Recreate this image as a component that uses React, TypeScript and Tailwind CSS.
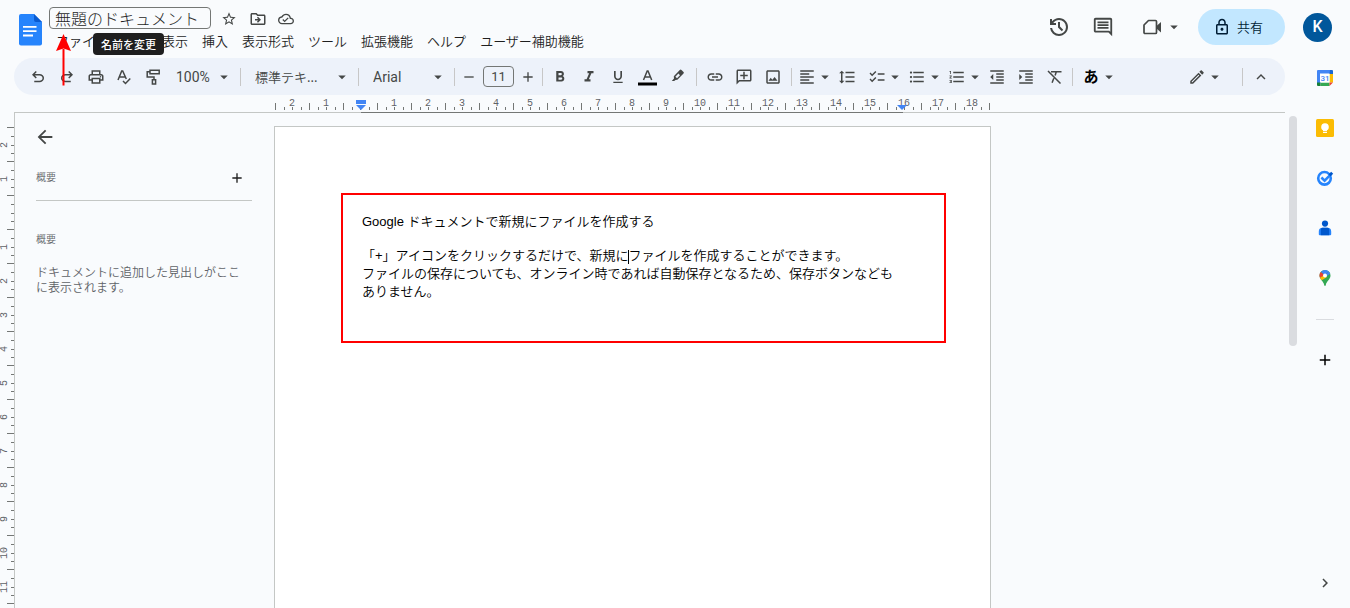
import type { ReactNode } from "react";

import clsx from "clsx";
import {
  MdAdd,
  MdArrowBack,
  MdArrowDropDown,
  MdChecklist,
  MdChevronRight,
  MdExpandLess,
  MdFormatAlignLeft,
  MdFormatBold,
  MdFormatIndentDecrease,
  MdFormatIndentIncrease,
  MdFormatItalic,
  MdFormatLineSpacing,
  MdFormatListBulleted,
  MdFormatListNumbered,
  MdFormatUnderlined,
  MdLink,
  MdOutlineAddComment,
  MdOutlineCloudDone,
  MdOutlineComment,
  MdOutlineDriveFileMove,
  MdOutlineEdit,
  MdOutlineImage,
  MdOutlineLock,
  MdOutlinePrint,
  MdRemove,
  MdStarBorder,
} from "react-icons/md";

const menus = [
  "ファイル",
  "編集",
  "表示",
  "挿入",
  "表示形式",
  "ツール",
  "拡張機能",
  "ヘルプ",
  "ユーザー補助機能",
];

// One entry per centimetre, counted outwards from the margin.
const horizontalMarks = Array.from({ length: 21 }, (_, i) => i - 2);
const verticalMarks = Array.from({ length: 14 }, (_, i) => i - 2);

function DocsLogo() {
  return (
    <svg viewBox="0 0 24 32" className="h-8 w-6" aria-hidden>
      <path d="M3 0H16l8 8v21.500a2 2 0 0 1-2 2H3a2 2 0 0 1-2-2V2a2 2 0 0 1 2-2Z" fill="#2684fc" />
      <path d="M16 0l8 8h-6a2 2 0 0 1-2-2Z" fill="#0a5bd0" />
      <path d="M5 12h13.500v1.800H5zM5 16.300h13.500v1.800H5zM5 20.600h10v1.800H5z" fill="#fff" />
    </svg>
  );
}

function UndoIcon({ className }: { className?: string }) {
  return (
    <svg viewBox="0 -960 960 960" fill="currentColor" className={clsx("size-[18px]", className)} aria-hidden>
      <path d="M280-200v-80h284q63 0 109.500-40T720-420q0-60-46.500-100T564-560H312l104 104-56 56-200-200 200-200 56 56-104 104h252q97 0 169.500 63T800-420q0 94-72.500 157T564-200H280Z" />
    </svg>
  );
}

function HistoryIcon() {
  return (
    <svg viewBox="0 -960 960 960" fill="currentColor" className="size-6" aria-hidden>
      <path d="M480-120q-138 0-240.500-91.500T122-440h82q14 104 92.500 172T480-200q117 0 198.500-81.500T760-480q0-117-81.500-198.500T480-760q-69 0-129 32t-101 88h110v80H120v-240h80v94q51-64 124.500-99T480-840q75 0 140.500 28.500t114 77q48.500 48.500 77 114T840-480q0 75-28.500 140.500t-77 114q-48.500 48.500-114 77T480-120Zm112-192L440-464v-216h80v184l128 128-56 56Z" />
    </svg>
  );
}

function MeetIcon() {
  return (
    <svg viewBox="0 0 20 16" className="h-4 w-5" aria-hidden>
      <path d="M6.500 1.500H13.500a1 1 0 0 1 1 1v11a1 1 0 0 1-1 1H3a1 1 0 0 1-1-1V6Z" fill="none" stroke="currentColor" strokeWidth="1.700" strokeLinejoin="round" />
      <path d="M14.500 7l4.500-4v10.500L14.500 9.500Z" fill="currentColor" />
    </svg>
  );
}

function SpellIcon() {
  return (
    <svg viewBox="0 0 18 18" className="size-[18px]" fill="none" stroke="currentColor" strokeWidth="1.500" aria-hidden>
      <path d="M2 12L5.700 3h1L10.300 11M3.400 8.900h5.600" />
      <path d="M7 13l2.500 2.500L14.300 10.500" />
    </svg>
  );
}

function PaintIcon() {
  return (
    <svg viewBox="0 0 18 18" className="size-[18px]" fill="none" stroke="currentColor" strokeWidth="1.500" aria-hidden>
      <path d="M5 2.200h9.200v3.600H5zM5 3.800H2.200V9H9v2.500" />
      <path d="M7.400 11.700h3.200v4.300H7.400z" />
    </svg>
  );
}

function HighlightIcon() {
  return (
    <svg viewBox="0 0 18 18" className="size-[18px]" aria-hidden>
      <path d="M5.800 8.200l6-6.300a1.200 1.200 0 0 1 1.700 0l2 2a1.200 1.200 0 0 1 0 1.700L9.400 11.800 7.500 11.900 6.200 13H3.800l2.200-2.600Z" fill="currentColor" />
      <path d="M7.400 8.700l3-3.100 1.600 1.600-3 3.100Z" fill="#edf2fa" />
    </svg>
  );
}

function ClearFormatIcon() {
  return (
    <svg viewBox="0 0 18 18" className="size-[18px]" fill="none" stroke="currentColor" strokeWidth="1.500" aria-hidden>
      <path d="M2 3l12.500 12.500M5 3.700h10.500M10.300 3.700L9.100 7.500M7.800 10.300L6.100 14.800" />
    </svg>
  );
}

function CalendarIcon() {
  return (
    <svg viewBox="0 0 18 18" className="size-[18px]" aria-hidden>
      <path d="M2 1h12v4H5v9H1V2a1 1 0 0 1 1-1Z" fill="#4285f4" />
      <path d="M14 1h2a1 1 0 0 1 1 1v3h-3.500Z" fill="#1967d2" />
      <path d="M13.500 5H17v8.500h-3.500Z" fill="#fbbc04" />
      <path d="M4.500 13.500h9V17h-9Z" fill="#34a853" />
      <path d="M1 13.500h3.500V17H2a1 1 0 0 1-1-1Z" fill="#188038" />
      <path d="M13.500 13.500H17L13.500 17Z" fill="#ea4335" />
      <path d="M4 4.500h9.500v9H4z" fill="#fff" />
      <text x="9" y="12" textAnchor="middle" fontSize="8" fontFamily="Roboto" fontWeight="500" fill="#4285f4">
        31
      </text>
    </svg>
  );
}

function KeepIcon() {
  return (
    <svg viewBox="0 0 18 18" className="size-[18px]" aria-hidden>
      <rect width="18" height="18" rx="1.500" fill="#fbbc04" />
      <circle cx="9" cy="8" r="3.800" fill="#fff" />
      <path d="M7 10h4v2H7zM7 12.700h4V14H7z" fill="#fff" />
    </svg>
  );
}

function TasksIcon() {
  return (
    <svg viewBox="0 0 18 18" className="size-[18px]" fill="none" aria-hidden>
      <circle cx="8.500" cy="9.300" r="6.300" stroke="#2684fc" strokeWidth="2.600" />
      <path d="M5.400 8.500l3.200 3.200 6.500-6.500" stroke="#2684fc" strokeWidth="2.500" />
      <path d="M12.600 5.300l2.600-2.600 2 2-2.900 2.900Z" fill="#0057cc" />
    </svg>
  );
}

function ContactsIcon() {
  return (
    <svg viewBox="0 0 18 18" className="size-[18px]" aria-hidden>
      <circle cx="9" cy="4.600" r="3.100" fill="#0057cc" />
      <path d="M6.500 8.800h5a3.700 3.700 0 0 1 3.700 3.700v2.800a.9.900 0 0 1-.9.900H3.700a.9.900 0 0 1-.9-.9v-2.800a3.700 3.700 0 0 1 3.700-3.700Z" fill="#2684fc" />
      <path d="M6.500 8.800h5c1 0 1.700.9 1.700 2v5.400H4.800v-5.400c0-1.100.7-2 1.700-2Z" fill="#0057cc" />
    </svg>
  );
}

function MapsIcon() {
  return (
    <svg viewBox="0 0 18 18" className="size-[18px]" aria-hidden>
      <path d="M9 1a5.500 5.500 0 0 0-5.500 5.500c0 4 4 5.500 4.700 9.500.1.600.4.900.8.900s.7-.3.800-.9c.7-4 4.700-5.500 4.700-9.500A5.500 5.500 0 0 0 9 1Z" fill="#34a853" />
      <path d="M9 1a5.500 5.500 0 0 0-4.200 2L9 6.500l3.600-4.100A5.500 5.500 0 0 0 9 1Z" fill="#4285f4" />
      <path d="M4.800 3a5.500 5.500 0 0 0-.8 5.700L9 6.500Z" fill="#ea4335" />
      <path d="M4 8.700c.4.900 1 1.700 1.700 2.500L11 8 9 5.800Z" fill="#fbbc04" />
      <path d="M12.600 2.400a5.500 5.500 0 0 1 1.600 2.300L9.500 8 8.500 7Z" fill="#4285f4" />
      <circle cx="9" cy="6.500" r="2" fill="#fff" />
    </svg>
  );
}

function IconButton({
  label,
  className,
  children,
}: {
  label: string;
  className?: string;
  children: ReactNode;
}) {
  return (
    <button
      type="button"
      aria-label={label}
      className={clsx("flex h-7 shrink-0 items-center justify-center", className ?? "w-[29px]")}
    >
      {children}
    </button>
  );
}

function MenuButton({
  label,
  className,
  children,
}: {
  label: string;
  className?: string;
  children: ReactNode;
}) {
  return (
    <button
      type="button"
      aria-label={label}
      className={clsx("flex h-7 w-10 shrink-0 items-center pl-1.5", className)}
    >
      {children}
      <MdArrowDropDown className="size-[18px] shrink-0" />
    </button>
  );
}

function ToolSelect({
  label,
  value,
  className,
}: {
  label: string;
  value: string;
  className?: string;
}) {
  return (
    <label className={clsx("relative flex h-7 shrink-0 items-center", className)}>
      <select
        aria-label={label}
        defaultValue={value}
        className="h-7 w-full appearance-none bg-transparent"
      >
        <option>{value}</option>
      </select>
      <MdArrowDropDown className="pointer-events-none absolute right-[7px] size-[18px]" />
    </label>
  );
}

function Separator({ className }: { className?: string }) {
  return <span className={clsx("h-[18px] w-px shrink-0 bg-[#c7c7c7]", className)} />;
}

function Header() {
  return (
    <header className="relative flex h-[58px] shrink-0 justify-between pr-[18px] pl-[18px]">
      <div className="flex">
        <a href="#home" aria-label="ドキュメント ホーム" className="mt-3.5 h-8 w-6">
          <DocsLogo />
        </a>
        <div className="ml-[7px] pt-[7px]">
          <div className="flex items-start">
            <input
              aria-label="名前を変更"
              defaultValue="無題のドキュメント"
              className="h-[22px] w-[162px] rounded-[4px] border border-[#747775] bg-transparent px-[5px] text-base leading-5 font-light text-[#1f1f1f]"
            />
            <div className="-mt-0.5 flex items-center text-[#444746]">
              <IconButton label="スター" className="ml-1 w-7">
                <MdStarBorder className="size-4" />
              </IconButton>
              <IconButton label="移動" className="w-[30px]">
                <MdOutlineDriveFileMove className="size-[18px]" />
              </IconButton>
              <IconButton label="ドキュメントのステータス" className="w-[26px]">
                <MdOutlineCloudDone className="size-4" />
              </IconButton>
            </div>
          </div>
          <nav className="-mt-0.5 flex text-[13px] leading-5 text-[#1f1f1f]">
            {menus.map((menu) => (
              <button key={menu} type="button" className="px-[7px] whitespace-nowrap">
                {menu}
              </button>
            ))}
          </nav>
        </div>
      </div>

      <div className="flex h-[54px] items-center text-[#444746]">
        <IconButton label="変更履歴" className="w-11">
          <HistoryIcon />
        </IconButton>
        <IconButton label="コメント" className="w-11">
          <MdOutlineComment className="size-[22px]" />
        </IconButton>
        <button type="button" aria-label="通話" className="mr-[15px] ml-[17px] flex items-center gap-[3px]">
          <MeetIcon />
          <MdArrowDropDown className="size-[18px]" />
        </button>
        <button
          type="button"
          className="flex h-9 w-[87px] items-center gap-1.5 rounded-full bg-[#c2e7ff] pl-[15px] text-[13px] text-[#001d35]"
        >
          <MdOutlineLock className="size-[18px]" />
          共有
        </button>
        <button
          type="button"
          aria-label="アカウント"
          className="ml-[18px] size-[29px] rounded-full bg-[#01579b] font-[Roboto] text-base font-medium text-white"
        >
          K
        </button>
      </div>

      <div
        role="tooltip"
        className="absolute top-[33px] left-[93px] z-10 rounded-[4px] bg-[#1f1f1f] px-2 text-[11px] leading-[22px] font-medium text-white"
      >
        名前を変更
      </div>
      <svg
        viewBox="0 0 16 52"
        className="absolute top-[34px] left-14 z-20 h-[52px] w-4"
        aria-hidden
      >
        <path d="M7.500 15v36.500" stroke="#f00" strokeWidth="2" />
        <path d="M7.500 0L15 17l-7.500-2.500L0 17Z" fill="#f00" />
      </svg>
    </header>
  );
}

function Toolbar() {
  return (
    <div
      role="toolbar"
      className="mr-[15px] ml-3.5 flex h-[37px] shrink-0 items-center rounded-full bg-[#edf2fa] pr-2.5 pl-[9px] text-[13px] text-[#444746]"
    >
      <IconButton label="元に戻す">
        <UndoIcon />
      </IconButton>
      <IconButton label="やり直し">
        <UndoIcon className="-scale-x-100" />
      </IconButton>
      <IconButton label="印刷">
        <MdOutlinePrint className="size-[18px]" />
      </IconButton>
      <IconButton label="スペルと文法のチェック">
        <SpellIcon />
      </IconButton>
      <IconButton label="書式の貼り付け">
        <PaintIcon />
      </IconButton>
      <ToolSelect
        label="ズーム"
        value="100%"
        className="w-[72px] pl-2 font-[Roboto] text-sm font-normal"
      />
      <Separator />
      <ToolSelect label="スタイル" value="標準テキ..." className="w-[117px] pl-3.5" />
      <Separator />
      <ToolSelect
        label="フォント"
        value="Arial"
        className="w-[95px] pl-3.5 font-[Roboto] text-sm font-normal"
      />
      <Separator />
      <IconButton label="フォントサイズを縮小" className="w-7">
        <MdRemove className="size-4" />
      </IconButton>
      <input
        aria-label="フォントサイズ"
        defaultValue="11"
        className="h-[21px] w-[31px] rounded-[4px] border border-[#747775] bg-transparent text-center font-[Roboto] text-[13px] font-normal"
      />
      <IconButton label="フォントサイズを拡大" className="w-[27px]">
        <MdAdd className="size-4" />
      </IconButton>
      <Separator className="mr-0.5 ml-px" />
      <IconButton label="太字">
        <MdFormatBold className="size-[18px]" />
      </IconButton>
      <IconButton label="斜体">
        <MdFormatItalic className="size-[18px]" />
      </IconButton>
      <IconButton label="下線">
        <MdFormatUnderlined className="size-4" />
      </IconButton>
      <IconButton label="テキストの色" className="w-[30px]">
        <svg viewBox="0 0 20 18" className="h-[18px] w-5" aria-hidden>
          <path d="M6.500 12l3.700-9h.8l3.700 9M7.800 9h5.600" fill="none" stroke="currentColor" strokeWidth="1.500" />
          <path d="M1 14.500h19v3H1z" fill="#000" />
        </svg>
      </IconButton>
      <IconButton label="ハイライトの色">
        <HighlightIcon />
      </IconButton>
      <Separator className="mr-[3px] ml-[5px]" />
      <IconButton label="リンクを挿入">
        <MdLink className="size-[18px]" />
      </IconButton>
      <IconButton label="コメントを追加">
        <MdOutlineAddComment className="size-[18px] -scale-x-100" />
      </IconButton>
      <IconButton label="画像を挿入">
        <MdOutlineImage className="size-[18px]" />
      </IconButton>
      <Separator className="ml-1" />
      <MenuButton label="配置">
        <MdFormatAlignLeft className="size-[18px] shrink-0" />
      </MenuButton>
      <IconButton label="行間隔と段落の間隔">
        <MdFormatLineSpacing className="size-[18px]" />
      </IconButton>
      <MenuButton label="チェックリスト" className="ml-px">
        <MdChecklist className="size-[18px] shrink-0" />
      </MenuButton>
      <MenuButton label="箇条書き">
        <MdFormatListBulleted className="size-[18px] shrink-0" />
      </MenuButton>
      <MenuButton label="番号付きリスト">
        <MdFormatListNumbered className="size-[18px] shrink-0" />
      </MenuButton>
      <IconButton label="インデント減">
        <MdFormatIndentDecrease className="size-[18px]" />
      </IconButton>
      <IconButton label="インデント増">
        <MdFormatIndentIncrease className="size-[18px]" />
      </IconButton>
      <IconButton label="書式をクリア">
        <ClearFormatIcon />
      </IconButton>
      <Separator className="mr-[3px] ml-[3px]" />
      <MenuButton label="入力ツール">
        <span className="w-[18px] shrink-0 text-center text-[15px] font-bold text-black">あ</span>
      </MenuButton>
      <MenuButton label="編集モード" className="ml-auto">
        <MdOutlineEdit className="size-[18px] shrink-0" />
      </MenuButton>
      <Separator className="mr-[3px] ml-5" />
      <IconButton label="メニューを非表示">
        <MdExpandLess className="size-[18px]" />
      </IconButton>
    </div>
  );
}

function HorizontalRuler() {
  return (
    <div className="mr-[15px] ml-3.5 flex h-[18px] shrink-0 border-b border-[#c4c7c5] pl-[261px]">
      {horizontalMarks.map((n) => (
        <div
          key={n}
          className="relative w-[34px] shrink-0 pt-[3px] text-center font-['Liberation_Mono'] text-[10px] leading-[11px] font-normal text-[#5f6368]"
        >
          {n !== 0 && <span>{Math.abs(n)}</span>}
          <svg viewBox="0 0 34 7" className="absolute bottom-0.5 left-0 h-[7px] w-[34px]" aria-hidden>
            <path d="M0 0h1v7H0zM9 4h1v3H9zM17 4h1v3h-1zM26 4h1v3h-1z" fill="#747775" />
          </svg>
          {n === 0 && (
            <>
              {/* 16 cm between the two indents */}
              <span className="absolute -bottom-px left-[18px] h-px w-[542px] bg-[#747775]" />
              <svg viewBox="0 0 10 11" className="absolute bottom-px left-[13px] h-[11px] w-2.5" aria-hidden>
                <path d="M0 0h10v4H0zM0 5h10L5 10Z" fill="#4285f4" />
              </svg>
            </>
          )}
          {n === 16 && (
            <svg viewBox="0 0 10 5" className="absolute bottom-0.5 left-2.5 h-[5px] w-2.5" aria-hidden>
              <path d="M0 0h10L5 5Z" fill="#4285f4" />
            </svg>
          )}
        </div>
      ))}
      <span className="mb-0.5 h-[7px] w-px self-end bg-[#747775]" />
    </div>
  );
}

function VerticalRuler() {
  return (
    <div className="flex w-3.5 shrink-0 flex-col overflow-hidden pt-3.5">
      {verticalMarks.map((n) => (
        <div
          key={n}
          className="flex h-[34px] shrink-0 justify-between font-['Liberation_Mono'] text-[10px] leading-[10px] font-normal text-[#5f6368]"
        >
          <span className="w-[7px] rotate-180 pb-0.5 text-center [writing-mode:vertical-rl]">
            {n === 0 ? "" : Math.abs(n)}
          </span>
          <svg viewBox="0 0 7 34" className="h-[34px] w-[7px] shrink-0" aria-hidden>
            <path d="M0 0h7v1H0zM4 9h3v1H4zM4 18h3v1H4zM4 26h3v1H4z" fill="#747775" />
          </svg>
        </div>
      ))}
      <span className="h-px w-[7px] shrink-0 self-end bg-[#747775]" />
    </div>
  );
}

function Outline() {
  return (
    <section aria-label="概要" className="w-[259px] shrink-0 pt-[13px] pr-[22px] pl-[21px] text-[#5f6368]">
      <button type="button" aria-label="閉じる" className="-ml-0.5 flex text-[#444746]">
        <MdArrowBack className="size-[22px]" />
      </button>
      <div className="mt-[15px] flex h-[38px] items-start justify-between border-b border-[#c4c7c5]">
        <h2 className="pt-1.5 text-[10px] leading-4 font-[350]">概要</h2>
        <button type="button" aria-label="概要を追加" className="mr-[7px] pt-[7px] text-[#1f1f1f]">
          <MdAdd className="size-4" />
        </button>
      </div>
      <h2 className="mt-[30px] text-[10px] leading-4 font-[350]">概要</h2>
      <p className="mt-[17px] w-[204px] text-xs leading-[15px] font-[350]">
        ドキュメントに追加した見出しがここに表示されます。
      </p>
    </section>
  );
}

function Page() {
  return (
    <article className="mt-[13px] w-[717px] shrink-0 border border-b-0 border-[#c4c7c5] bg-white px-[66px] pt-[66px]">
      <div className="h-[150px] w-[605px] border-2 border-[#f00] pt-[18px] pr-[41px] pl-[19px] font-['Liberation_Sans','Noto_Sans_CJK_JP',sans-serif] text-[13px] leading-[18px] font-[350] text-black">
        <p>Google ドキュメントで新規にファイルを作成する</p>
        <p className="mt-4">
          「+」アイコンをクリックするだけで、新規に
          <span className="-mr-px inline-block h-3.5 w-px bg-black align-middle" />
          ファイルを作成することができます。
        </p>
        <p>
          ファイルの保存についても、オンライン時であれば自動保存となるため、保存ボタンなどもありません。
        </p>
      </div>
    </article>
  );
}

function SideRail() {
  return (
    <aside className="flex w-[50px] shrink-0 flex-col items-center gap-8 pt-[11px] pb-4">
      <button type="button" aria-label="カレンダー">
        <CalendarIcon />
      </button>
      <button type="button" aria-label="Keep">
        <KeepIcon />
      </button>
      <button type="button" aria-label="ToDo リスト">
        <TasksIcon />
      </button>
      <button type="button" aria-label="連絡先">
        <ContactsIcon />
      </button>
      <button type="button" aria-label="マップ">
        <MapsIcon />
      </button>
      <hr className="w-[18px] border-[#dadce0]" />
      <button type="button" aria-label="アドオンを取得" className="-mt-px text-black">
        <MdAdd className="size-[18px]" />
      </button>
      <button type="button" aria-label="サイドパネルを非表示" className="mt-auto text-[#444746]">
        <MdChevronRight className="size-[18px]" />
      </button>
    </aside>
  );
}

export default function App() {
  return (
    <div className="flex h-screen flex-col overflow-hidden bg-[#f9fbfd] font-['Noto_Sans_CJK_JP',sans-serif] font-[350]">
      <Header />
      <div className="flex min-h-0 flex-1">
        <main className="flex min-w-0 flex-1 flex-col">
          <Toolbar />
          <HorizontalRuler />
          <div className="flex min-h-0 flex-1">
            <VerticalRuler />
            <div className="flex min-w-0 flex-1 border-l border-[#c4c7c5]">
              <Outline />
              <Page />
              <div className="mt-[3px] mr-[3px] ml-auto h-[230px] w-2 rounded-full bg-[#dadce0]" />
            </div>
          </div>
        </main>
        <SideRail />
      </div>
    </div>
  );
}
